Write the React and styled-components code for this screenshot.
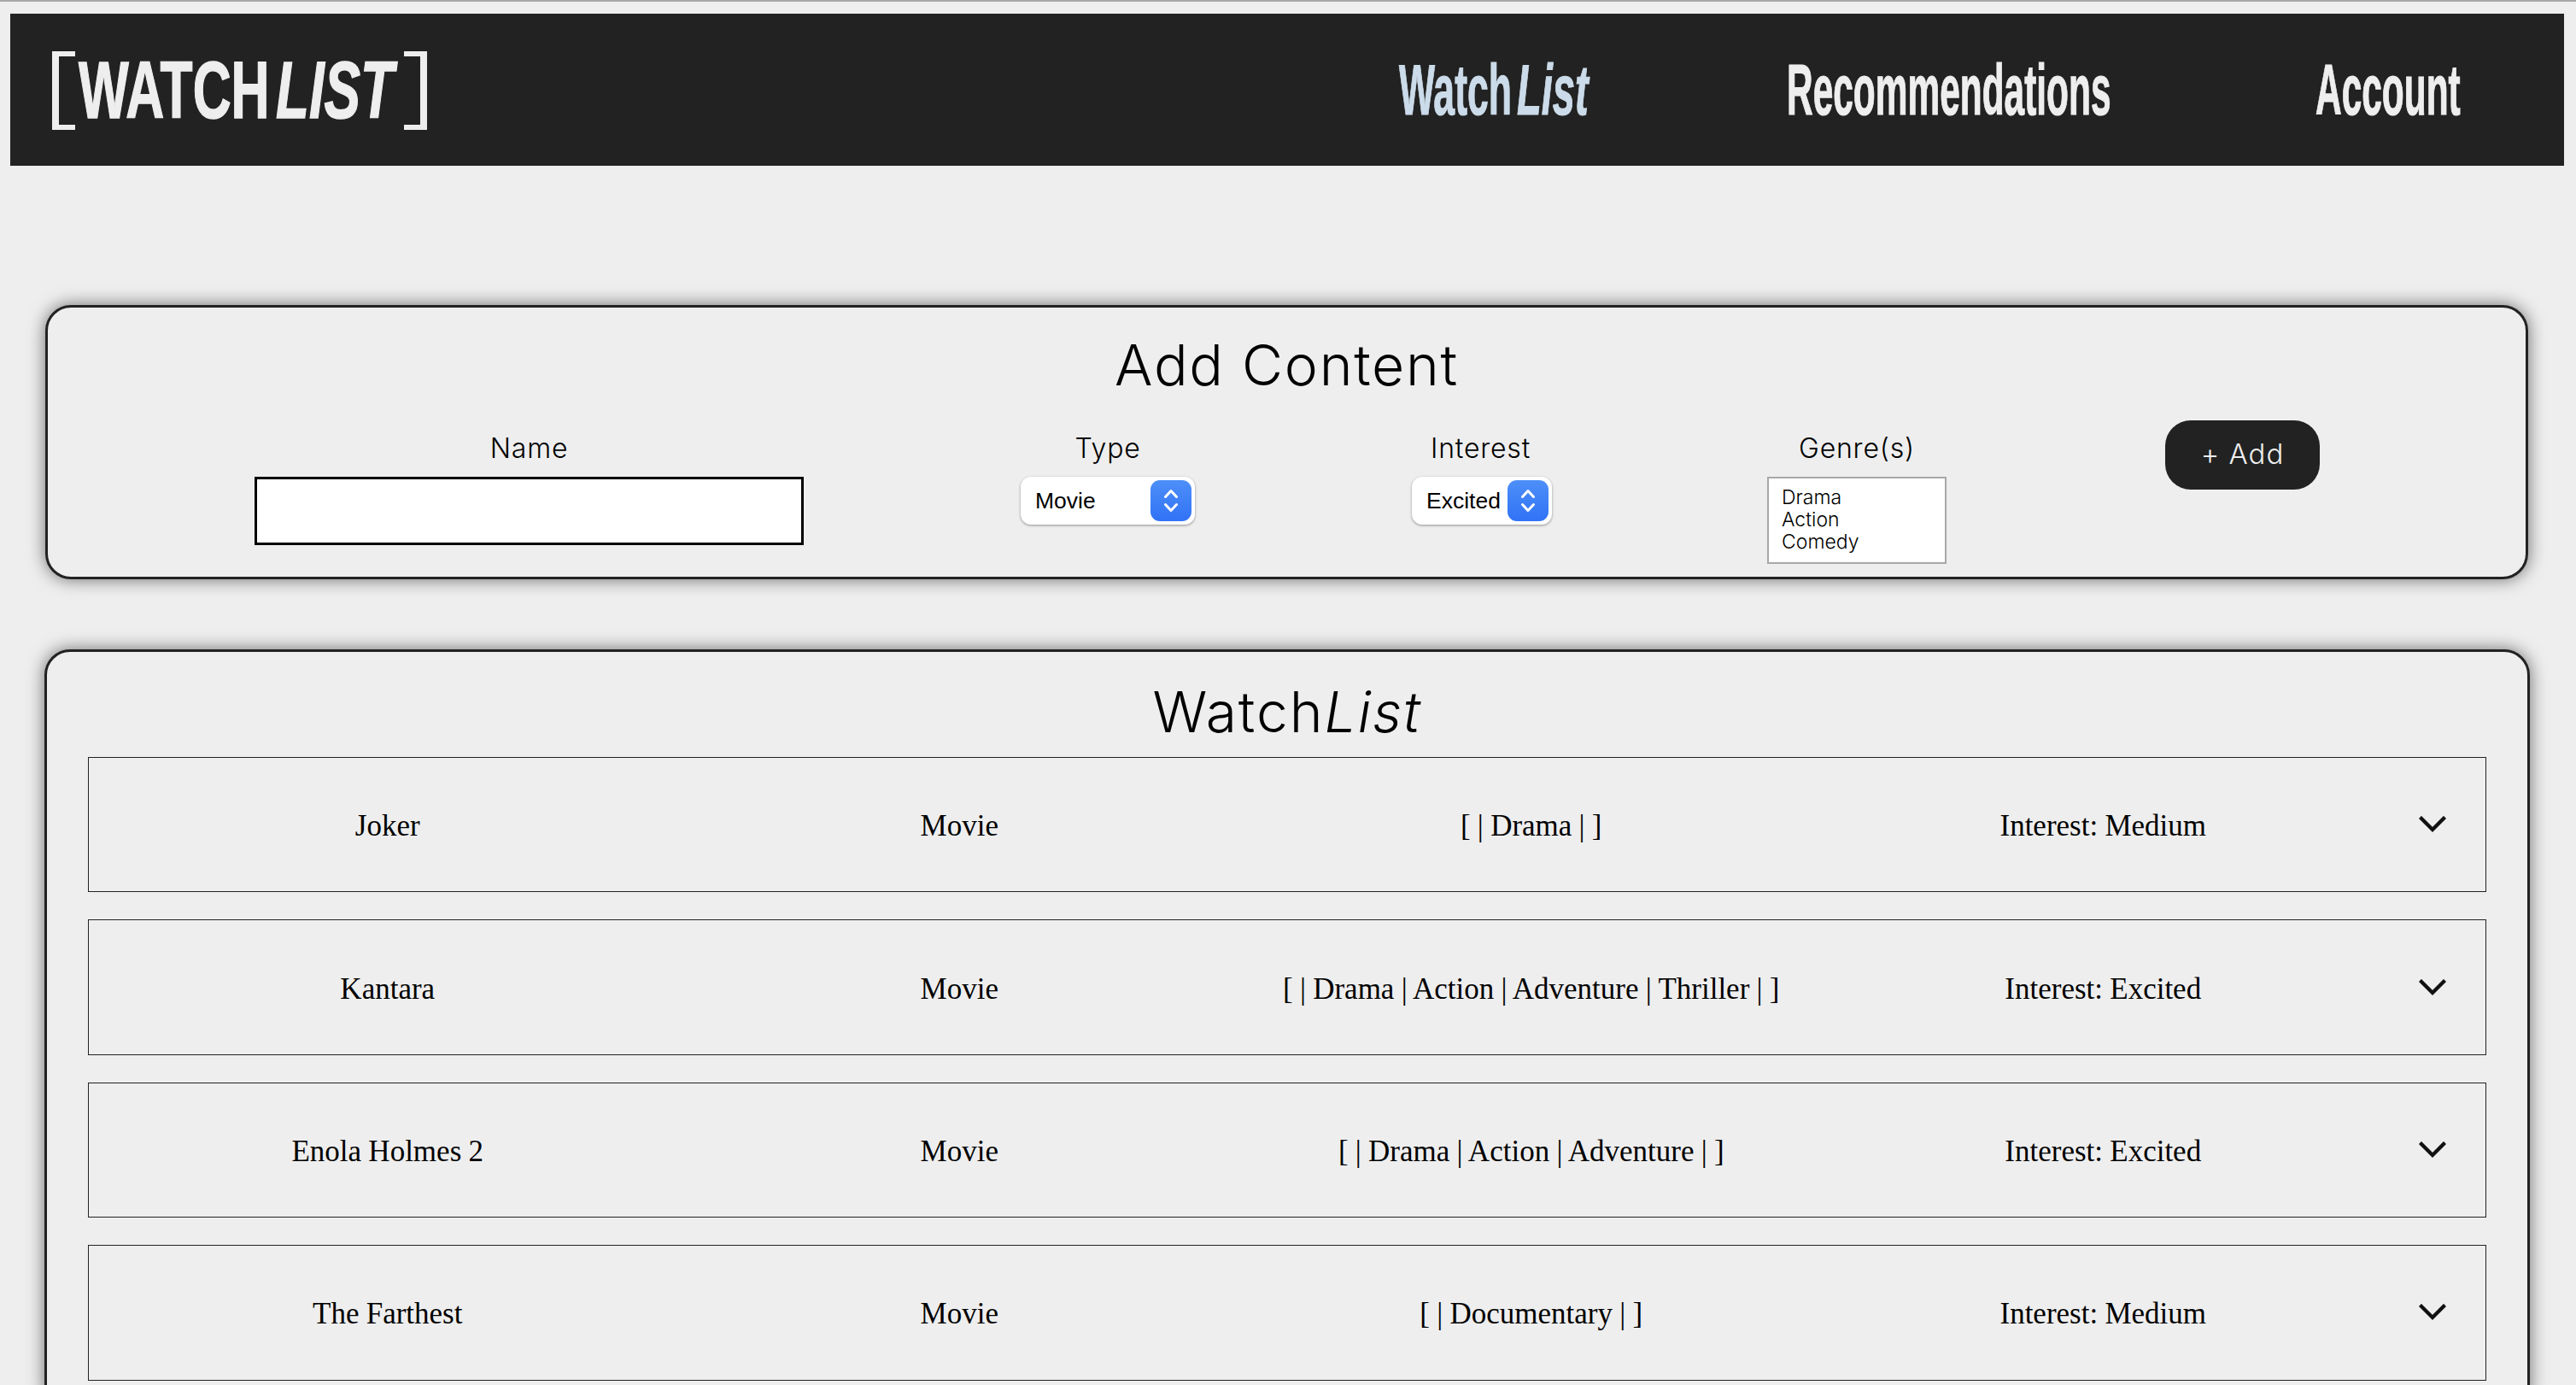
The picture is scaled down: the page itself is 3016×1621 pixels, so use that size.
import React from "react";
import styled, { createGlobalStyle } from "styled-components";

const Global = createGlobalStyle`
  html, body { margin: 0; padding: 0; height: 100%; overflow: hidden; background: #eeeeee; }
  * { box-sizing: border-box; }
  #root { height: 1621px; overflow: hidden; }
`;

const Page = styled.div`
  height: 1621px;
  overflow: hidden;
  border-top: 2px solid #a8a8a8;
  padding-top: 14px;
  background: #eeeeee;
  color: #000;
`;

const NavBar = styled.header`
  display: flex;
  align-items: center;
  justify-content: space-between;
  height: 178px;
  margin: 0 14px 0 12px;
  padding: 0 121px 0 49px;
  background: #222222;
  color: #eeeeee;
`;

const Logo = styled.div`
  display: flex;
  align-items: center;
  height: 92px;
  margin-top: 2px;
`;

const Bracket = styled.span`
  display: block;
  flex: none;
  width: 27px;
  height: 92px;
  margin-left: ${(p) => (p.$right ? "2px" : "0")};
  border-style: solid;
  border-color: #eeeeee;
  border-width: 6px ${(p) => (p.$right ? "8px" : "0")} 6px ${(p) => (p.$right ? "0" : "8px")};
`;

const Condensed = styled.span`
  display: block;
  flex: none;
  width: ${(p) => p.$w}px;
  margin-left: ${(p) => p.$ml || 0}px;
  font-family: "Liberation Sans", Arial, sans-serif;
  font-weight: 700;
  font-style: ${(p) => (p.$italic ? "italic" : "normal")};
  white-space: nowrap;
  transform: scaleX(${(p) => p.$scale});
  transform-origin: left center;
`;

const LogoWord = styled(Condensed)`
  margin-top: -3px;
  font-size: 95px;
  line-height: 92px;
  -webkit-text-stroke: 1.5px #eeeeee;
`;

const Links = styled.nav`
  display: flex;
  align-items: center;
  gap: 232px;
`;

const NavLink = styled.a`
  display: flex;
  color: ${(p) => (p.$active ? "#cbdbe9" : "#eeeeee")};
  font-size: 84px;
  line-height: 96px;
`;

const NavWord = styled(Condensed)`
  -webkit-text-stroke: 1.2px currentColor;
`;

const Cards = styled.main`
  display: flex;
  flex-direction: column;
  gap: 82px;
  margin: 163px 56px 0 53px;
`;

const Card = styled.section`
  border: 3px solid #222222;
  border-radius: 30px;
  box-shadow: 0 0 20px rgba(0, 0, 0, 0.55);
  background: #eeeeee;
`;

const AddCard = styled(Card)`
  height: 321px;
`;

const ListCard = styled(Card)`
  margin: 0 -2px 0 -1px;
  padding: 0 48px 32px;
`;

const Sans = `"Inter", "Liberation Sans", sans-serif`;

const AddTitle = styled.h2`
  margin: 0;
  height: 132px;
  font-family: ${Sans};
  font-weight: 300;
  font-size: 66px;
  letter-spacing: 1.7px;
  line-height: 134px;
  text-align: center;
`;

const ListTitle = styled.h2`
  margin: 0;
  height: 123px;
  padding-top: 18px;
  font-family: ${Sans};
  font-weight: 300;
  font-size: 66px;
  letter-spacing: 1.9px;
  line-height: 105px;
  text-align: center;
`;

const FormRow = styled.form`
  display: flex;
  justify-content: flex-start;
  align-items: flex-start;
  gap: 254px;
  padding-left: 242px;
`;

const Field = styled.div`
  display: flex;
  flex-direction: column;
  align-items: center;
  margin-left: ${(p) => p.$nudge || 0}px;
  padding-top: 11px;
`;

const Label = styled.label`
  height: 55px;
  margin-right: ${(p) => p.$shift || 0}px;
  font-family: ${Sans};
  font-weight: 300;
  font-size: 32px;
  letter-spacing: 0.8px;
  line-height: 44px;
`;

const NameInput = styled.input`
  display: block;
  width: 643px;
  height: 80px;
  border: 3px solid #000;
  border-radius: 0;
  background: #fff;
  outline: none;
`;

const SelectBox = styled.div`
  display: flex;
  align-items: center;
  justify-content: space-between;
  width: ${(p) => p.$w}px;
  height: 56px;
  padding: 0 4px 0 17px;
  border-radius: 12px;
  background: #fff;
  box-shadow: 0 1px 3px rgba(0, 0, 0, 0.4);
  font-family: "Liberation Sans", Arial, sans-serif;
  font-size: 26.5px;
`;

const Stepper = styled.span`
  display: flex;
  align-items: center;
  justify-content: center;
  width: 48px;
  height: 48px;
  border-radius: 11px;
  background: linear-gradient(#4d8ff8, #3172f6);
`;

const GenreList = styled.div`
  width: 210px;
  height: 102px;
  padding: 9px 15px;
  border: 2px solid #a8a8a8;
  background: #fff;
  font-family: ${Sans};
  font-weight: 300;
  font-size: 23px;
  line-height: 26px;
`;

const AddButton = styled.button`
  flex: none;
  width: 181px;
  height: 81px;
  margin-left: 2px;
  padding: 0 0 3px;
  border: none;
  border-radius: 30px;
  background: #222222;
  color: #eeeeee;
  font-family: ${Sans};
  font-weight: 300;
  font-size: 33px;
  letter-spacing: 1px;
`;

const Rows = styled.div`
  display: flex;
  flex-direction: column;
  gap: 32px;
`;

const Row = styled.div`
  display: grid;
  grid-template-columns: repeat(4, 669.5px) 1fr;
  align-items: center;
  height: 158.4px;
  padding: 0 12px 0 15px;
  border: 1.5px solid #222222;
  font-family: "Liberation Serif", "Times New Roman", serif;
  font-size: 35px;
  word-spacing: -0.5px;
`;

const Cell = styled.div`
  padding-top: 4px;
  text-align: center;
  white-space: nowrap;
`;

const Toggle = styled.div`
  display: flex;
  justify-content: center;
`;

const Arrows = () => (
  <svg width="16" height="28" viewBox="0 0 16 28" fill="none" stroke="#fff" strokeWidth="3" strokeLinecap="round" strokeLinejoin="round">
    <path d="M1.5 9.5 8 2.5l6.5 7" />
    <path d="M1.5 18.5 8 25.5l6.5-7" />
  </svg>
);

const Chevron = () => (
  <svg width="32" height="20" viewBox="0 0 32 20" fill="none" stroke="#111" strokeWidth="4.4" strokeLinecap="square">
    <path d="M3 3 16 16 29 3" />
  </svg>
);

const items = [
  ["Joker", "Movie", "[ | Drama | ]", "Interest: Medium"],
  ["Kantara", "Movie", "[ | Drama | Action | Adventure | Thriller | ]", "Interest: Excited"],
  ["Enola Holmes 2", "Movie", "[ | Drama | Action | Adventure | ]", "Interest: Excited"],
  ["The Farthest", "Movie", "[ | Documentary | ]", "Interest: Medium"],
];

export default function App() {
  return (
    <Page>
      <Global />
      <NavBar>
        <Logo>
          <Bracket />
          <LogoWord $w={220} $ml={4} $scale={0.655}>WATCH</LogoWord>
          <LogoWord $w={148} $ml={11} $scale={0.67} $italic>LIST</LogoWord>
          <Bracket $right />
        </Logo>
        <Links>
          <NavLink $active>
            <NavWord $w={138} $scale={0.53}>Watch</NavWord>
            <NavWord $w={84} $scale={0.56} $italic>List</NavWord>
          </NavLink>
          <NavLink><NavWord $w={387} $scale={0.505}>Recommendations</NavWord></NavLink>
          <NavLink><NavWord $w={170} $scale={0.505}>Account</NavWord></NavLink>
        </Links>
      </NavBar>
      <Cards>
        <AddCard>
          <AddTitle>Add Content</AddTitle>
          <FormRow>
            <Field>
              <Label>Name</Label>
              <NameInput />
            </Field>
            <Field>
              <Label>Type</Label>
              <SelectBox $w={204}>Movie<Stepper><Arrows /></Stepper></SelectBox>
            </Field>
            <Field>
              <Label $shift={3}>Interest</Label>
              <SelectBox $w={164}>Excited<Stepper><Arrows /></Stepper></SelectBox>
            </Field>
            <Field $nudge={-2}>
              <Label>Genre(s)</Label>
              <GenreList>Drama<br />Action<br />Comedy</GenreList>
            </Field>
            <AddButton type="button">+ Add</AddButton>
          </FormRow>
        </AddCard>
        <ListCard>
          <ListTitle>Watch<i>List</i></ListTitle>
          <Rows>
            {items.map((r) => (
              <Row key={r[0]}>
                {r.map((c) => <Cell key={c}>{c}</Cell>)}
                <Toggle><Chevron /></Toggle>
              </Row>
            ))}
          </Rows>
        </ListCard>
      </Cards>
    </Page>
  );
}
